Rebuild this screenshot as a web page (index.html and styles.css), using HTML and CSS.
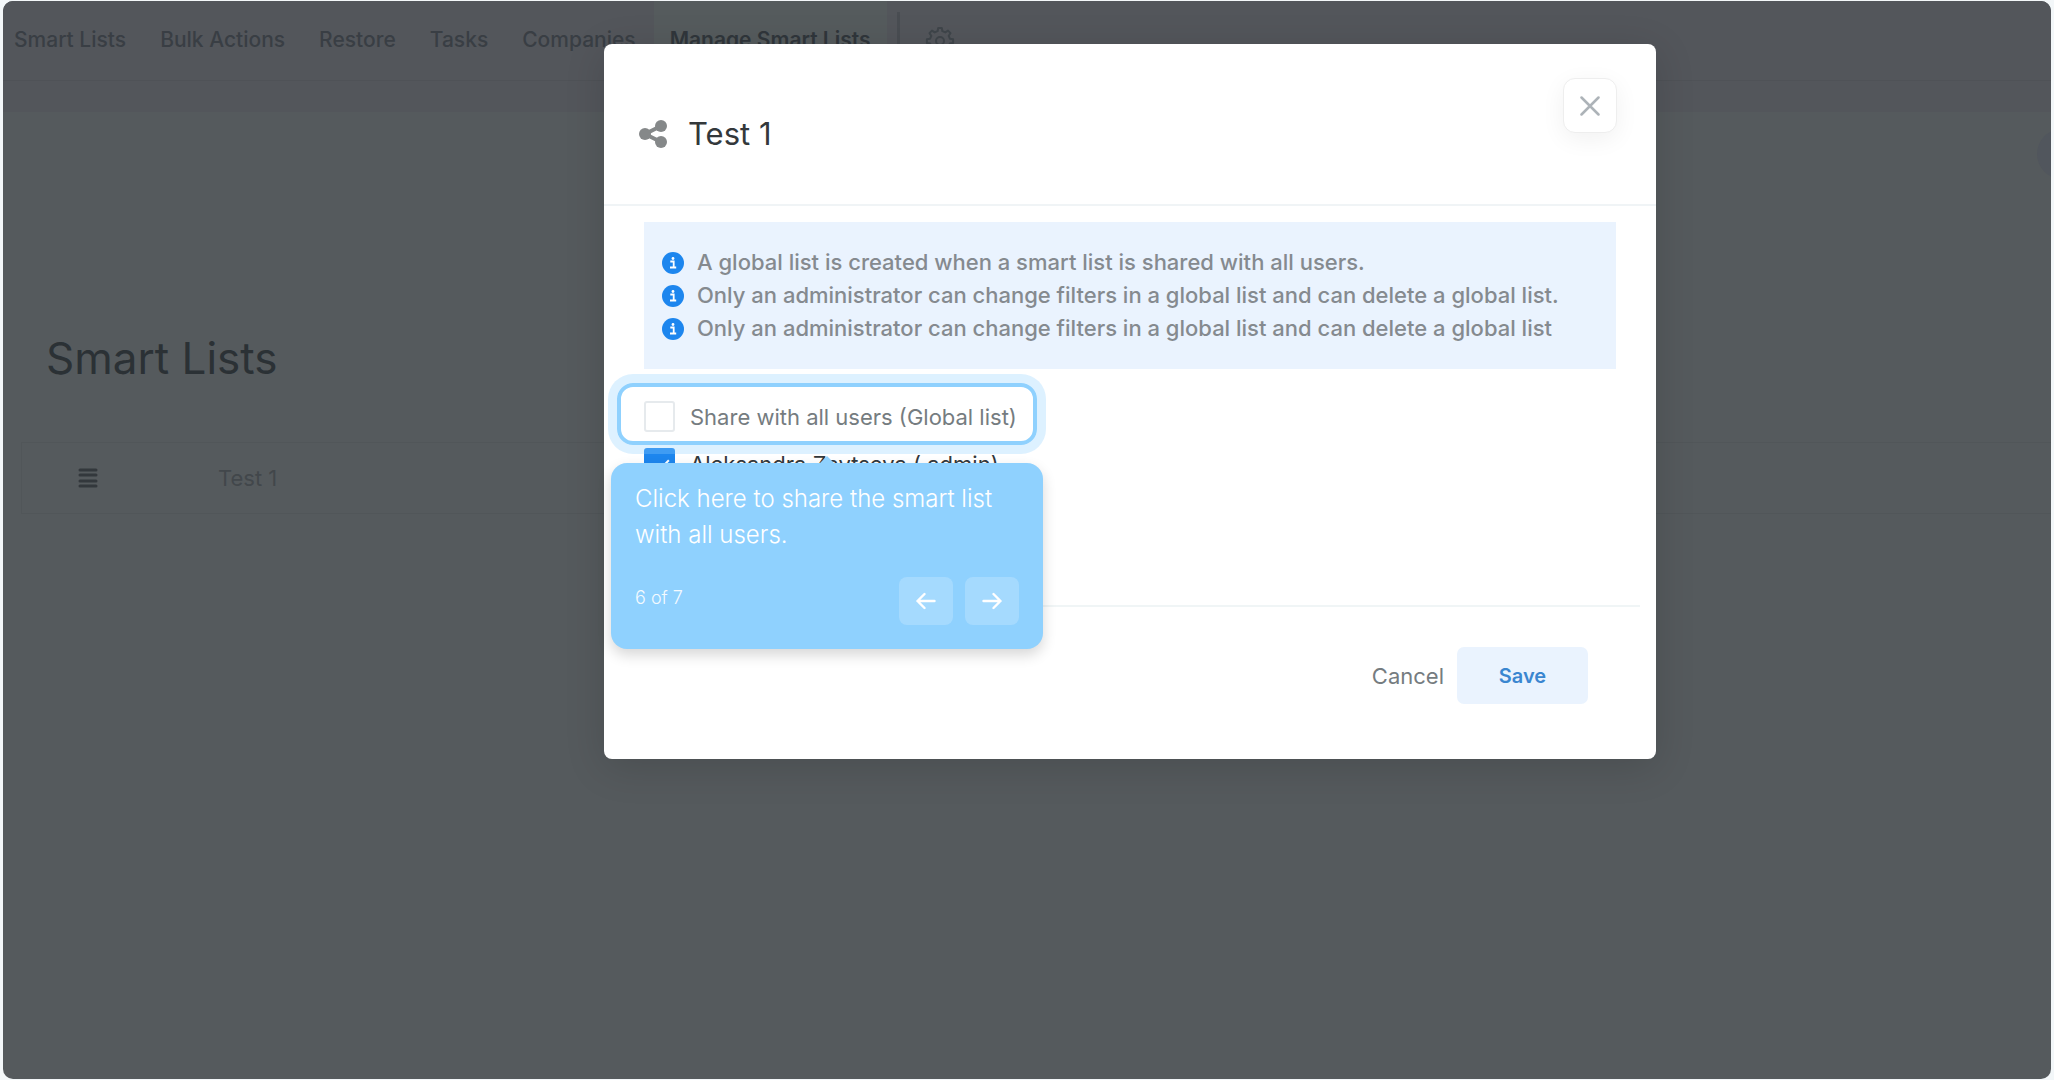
FILE: index.html
```html
<!DOCTYPE html>
<html lang="en">
<head>
<meta charset="utf-8">
<meta name="viewport" content="width=device-width, initial-scale=1">
<title>Manage Smart Lists</title>
<link rel="stylesheet" href="styles.css">
</head>
<body>
<div class="app">
  <header class="topbar">
    <nav class="tabs">
      <a class="tab" href="#">Smart Lists</a>
      <a class="tab" href="#">Bulk Actions</a>
      <a class="tab" href="#">Restore</a>
      <a class="tab" href="#">Tasks</a>
      <a class="tab" href="#">Companies</a>
      <a class="tab tab-active" href="#">Manage Smart Lists</a>
    </nav>
    <span class="divider"></span>
    <button class="gear" type="button" aria-label="Settings">
      <svg width="30" height="30" viewBox="0 0 30 30" fill="none" stroke="currentColor" stroke-width="2" stroke-linejoin="round"><path d="M12.6 5.2 13.2 2h3.6l.6 3.2 2.9 1.2 2.7-1.8 2.5 2.5-1.8 2.7 1.2 2.9 3.2.6v3.6l-3.2.6-1.2 2.9 1.8 2.7-2.5 2.5-2.7-1.8-2.9 1.2-.6 3.2h-3.6l-.6-3.2-2.9-1.2L7 25.600l-2.500-2.500 1.800-2.700-1.200-2.900-3.200-.6v-3.600l3.200-.6 1.200-2.900L4.500 7.100 7 4.600l2.700 1.800z"/><circle cx="15" cy="15" r="4"/></svg>
    </button>
  </header>
  <div class="subbar"></div>
  <main class="page">
    <span class="bubble"></span>
    <h1 class="page-title">Smart Lists</h1>
    <div class="list-row">
      <svg class="grip" width="20" height="20" viewBox="0 0 20 20" stroke="currentColor" stroke-width="3" stroke-linecap="round"><path d="M2 2h16M2 7h16M2 13h16M2 18h16"/></svg>
      <span>Test 1</span>
    </div>
  </main>

  <div class="overlay">
    <section class="modal" role="dialog" aria-labelledby="modal-title">
      <header class="modal-head">
        <svg class="share" width="28" height="28" viewBox="0 0 28 28" fill="currentColor"><path d="M6 14 22 6M6 14l16 8" stroke="currentColor" stroke-width="4"/><circle cx="6" cy="14" r="6"/><circle cx="22" cy="6" r="6"/><circle cx="22" cy="22" r="6"/></svg>
        <h2 class="modal-title" id="modal-title">Test 1</h2>
        <button class="close" type="button" aria-label="Close">
          <svg width="20" height="20" viewBox="0 0 20 20" fill="none" stroke="currentColor" stroke-width="2.500" stroke-linecap="round"><path d="m1.500 1.500 17 17M18.500 1.500l-17 17"/></svg>
        </button>
      </header>
      <div class="modal-body">
        <ul class="notes">
          <li class="note"><svg class="info" width="22" height="22" viewBox="0 0 22 22"><circle cx="11" cy="11" r="11" fill="#1d86ee"/><path d="M8.300 9.500h3.400v6M8 15.500h6.200" fill="none" stroke="#fff" stroke-width="1.800"/><circle cx="11" cy="6.500" r="1.400" fill="#fff"/></svg>A global list is created when a smart list is shared with all users.</li>
          <li class="note"><svg class="info" width="22" height="22" viewBox="0 0 22 22"><circle cx="11" cy="11" r="11" fill="#1d86ee"/><path d="M8.300 9.500h3.400v6M8 15.500h6.200" fill="none" stroke="#fff" stroke-width="1.800"/><circle cx="11" cy="6.500" r="1.400" fill="#fff"/></svg>Only an administrator can change filters in a global list and can delete a global list.</li>
          <li class="note"><svg class="info" width="22" height="22" viewBox="0 0 22 22"><circle cx="11" cy="11" r="11" fill="#1d86ee"/><path d="M8.300 9.500h3.400v6M8 15.500h6.200" fill="none" stroke="#fff" stroke-width="1.800"/><circle cx="11" cy="6.500" r="1.400" fill="#fff"/></svg>Only an administrator can change filters in a global list and can delete a global list</li>
        </ul>
        <div class="choices">
          <label class="choice"><input class="check" type="checkbox">Share with all users (Global list)</label>
          <label class="choice choice-on"><input class="check" type="checkbox" checked>Aleksandra Zaytseva ( admin)</label>
          <div class="spotlight"></div>
          <aside class="tip">
            <p class="tip-text">Click here to share the smart list with all users.</p>
            <div class="tip-foot">
              <span class="tip-count">6 of 7</span>
              <button class="tip-btn" type="button" aria-label="Previous"><svg width="20" height="18" viewBox="0 0 20 18" fill="none" stroke="currentColor" stroke-width="2.400" stroke-linecap="round" stroke-linejoin="round"><path d="M18.500 9h-17M8.500 2l-7 7 7 7"/></svg></button>
              <button class="tip-btn" type="button" aria-label="Next"><svg width="20" height="18" viewBox="0 0 20 18" fill="none" stroke="currentColor" stroke-width="2.400" stroke-linecap="round" stroke-linejoin="round"><path d="M1.500 9h17M11.500 2l7 7-7 7"/></svg></button>
            </div>
          </aside>
        </div>
      </div>
      <footer class="modal-foot">
        <button class="cancel" type="button">Cancel</button>
        <button class="save" type="button">Save</button>
      </footer>
    </section>
  </div>
</div>
</body>
</html>
```
FILE: styles.css
```css
* { box-sizing: border-box; }
body {
  margin: 0;
  padding: 1px 3px;
  min-height: 100vh;
  display: flex;
  background: #f3f7f9;
  font-family: Inter, "Liberation Sans", sans-serif;
  font-size: 22px;
}
button { font: inherit; border: 0; padding: 0; background: none; }
h1, h2, p, ul { margin: 0; padding: 0; }
h1, h2 { font-weight: 400; }
svg { display: block; flex: none; }

.app {
  position: relative;
  flex: 1;
  overflow: hidden;
  border-radius: 10px;
  background: #555a5d;
}

/* dimmed page behind the dialog */
.topbar {
  display: flex;
  height: 80px;
  padding-left: 11px;
  background: #53565b;
  border-bottom: 1px solid #4f5257;
}
.tabs { display: flex; gap: 34px; }
.tab {
  line-height: 78px;
  color: #393e44;
  font-size: 21px;
  font-weight: 500;
  text-decoration: none;
}
.tab-active {
  padding: 0 16px;
  margin-left: -16px;
  background: #555b5d;
  color: #30363b;
  font-weight: 600;
}
.divider { width: 3px; height: 56px; margin: 11px 0 0 10px; background: #494d52; }
.gear { width: 30px; margin-left: 25px; color: #3f454a; }
.subbar { height: 31px; background: #53565b; }
.page { position: relative; padding-left: 18px; }
.bubble {
  position: absolute;
  right: -36px;
  top: 17px;
  width: 50px;
  height: 50px;
  border-radius: 50%;
  background: #51565d;
}
.page-title {
  padding: 218px 0 56px 25px;
  color: #2b3135;
  font-size: 44px;
  line-height: 56px;
}
.list-row {
  display: flex;
  align-items: center;
  height: 72px;
  padding-left: 56px;
  border: 1px solid #515659;
  border-right: 0;
  color: #42474b;
}
.grip { margin-right: 120px; color: #33383c; }

/* dialog */
.overlay {
  position: absolute;
  inset: 0;
  display: flex;
  justify-content: center;
  align-items: flex-start;
  padding: 43px 0 0 206px;
}
.modal {
  width: 100%;
  max-width: 1052px;
  border-radius: 8px;
  background: #fff;
  box-shadow: 0 8px 40px rgba(0, 0, 0, .14);
}
.modal-head {
  display: flex;
  align-items: center;
  height: 162px;
  padding: 0 39px 0 35px;
  border-bottom: 2px solid #f0f4f6;
}
.share { color: #858889; margin-top: 20px; }
.modal-title { flex: 1; margin: 20px 0 0 21px; color: #33383b; font-size: 31px; line-height: 40px; }
.close {
  display: flex;
  align-items: center;
  justify-content: center;
  align-self: flex-start;
  width: 54px;
  height: 55px;
  margin-top: 34px;
  border: 1px solid #eee;
  border-radius: 12px;
  background: #fff;
  color: #adb3b8;
  box-shadow: 0 6px 24px rgba(0, 0, 0, .06);
}
.modal-body { margin: 0 16px; padding: 16px 24px 0; border-bottom: 2px solid #f0f5f6; }
.notes { padding: 24px 18px; background: #eaf3fe; list-style: none; }
.note {
  display: flex;
  align-items: center;
  gap: 13px;
  line-height: 33px;
  color: #858a8f;
  font-weight: 500;
}
.choices { position: relative; height: 236px; padding-top: 32px; }
.choice {
  display: flex;
  align-items: center;
  gap: 15px;
  height: 31px;
  margin-bottom: 16px;
  color: #757c80;
}
.choice-on { color: #33383b; }
.check {
  appearance: none;
  width: 31px;
  height: 31px;
  margin: 0;
  border: 2px solid #e6eaed;
  border-radius: 3px;
  background: #fff;
}
.check:checked {
  border-color: #1d86ee;
  background: #1d86ee;
  display: grid;
  place-items: center;
}
.check:checked::before {
  content: "";
  width: 8px;
  height: 15px;
  border: solid #fff;
  border-width: 0 2px 2px 0;
  transform: rotate(45deg);
}

/* guided tour */
.spotlight {
  position: absolute;
  left: -27px;
  top: 14px;
  width: 420px;
  height: 62px;
  border: 4px solid #8fd1fe;
  border-radius: 16px;
  box-shadow: 0 0 0 9px rgba(143, 209, 254, .3);
}
.tip {
  position: absolute;
  left: -33px;
  top: 94px;
  width: 432px;
  padding: 18px 24px 24px;
  border-radius: 16px;
  background: #8fd1fe;
  color: #fff;
  font-weight: 300;
  font-optical-sizing: none;
  box-shadow: 0 6px 14px rgba(0, 0, 0, .16);
}
.tip::before {
  content: "";
  position: absolute;
  left: 208px;
  top: -7px;
  border: solid transparent;
  border-width: 0 8px 8px;
  border-bottom-color: #8fd1fe;
}
.tip-text { font-size: 24px; line-height: 36px; }
.tip-foot { display: flex; align-items: center; gap: 12px; margin-top: 24px; }
.tip-count { flex: 1; padding-bottom: 8px; font-size: 18px; opacity: .9; }
.tip-btn {
  display: flex;
  align-items: center;
  justify-content: center;
  width: 54px;
  height: 48px;
  border-radius: 8px;
  background: rgba(255, 255, 255, .2);
  color: #fff;
}

.modal-foot {
  display: flex;
  justify-content: flex-end;
  gap: 13px;
  padding: 40px 68px 55px;
}
.cancel { color: #757c80; }
.save {
  width: 131px;
  height: 57px;
  border-radius: 7px;
  background: #eaf3fe;
  color: #3a86d0;
  font-size: 20px;
  font-weight: 600;
}
```
